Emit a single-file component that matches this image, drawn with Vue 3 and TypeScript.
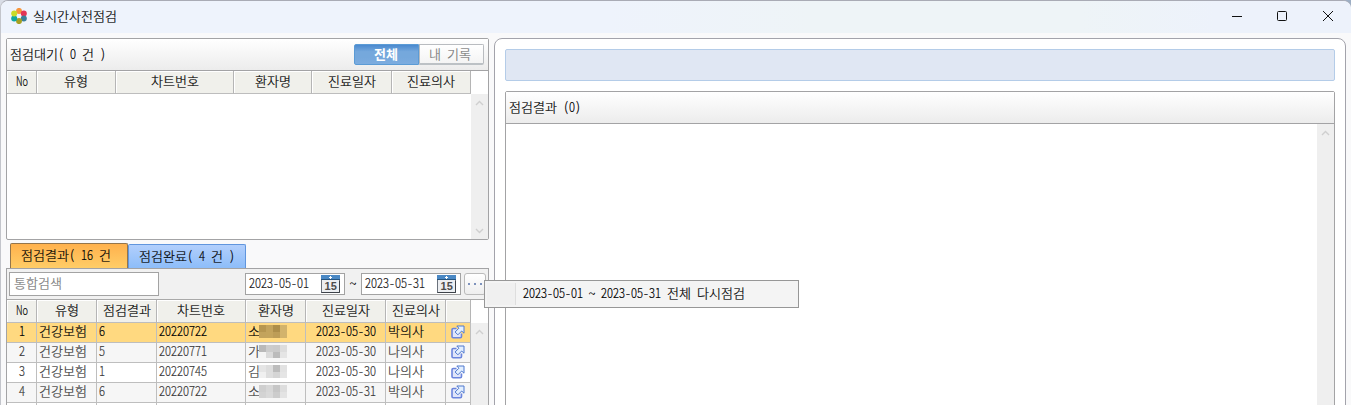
<script setup lang="ts">
import { h, type FunctionalComponent } from 'vue'

interface Column { label: string; width: number }
interface Row { no: string; kind: string; result: string; chart: string; name: string; date: string; doctor: string; mask: string[] }

// Text on a fixed grid: 12px for a Hangul syllable, 6px for a Latin character.
const Grid: FunctionalComponent<{ t: string; bold?: boolean }> = (props) => {
  const runs = props.t.match(/[가-힣]+|[0-9]+|[A-Za-z]+|[^가-힣0-9A-Za-z]/g) ?? []
  let x = 0
  const nodes = []
  for (const run of runs) {
    const hangul = /[가-힣]/.test(run)
    const width = run.length * (hangul ? 12 : 6)
    if (/[()~-]/.test(run)) {
      nodes.push(h('text', { x: x + 3, y: 11, 'text-anchor': 'middle' }, run))
    } else if (run !== ' ') {
      nodes.push(h('text', { x, y: 11, textLength: width, lengthAdjust: 'spacingAndGlyphs' }, run))
    }
    x += width
  }
  return h('svg', { class: ['grid-text', { bold: props.bold }], width: x, height: 14 }, nodes)
}
Grid.props = ['t', 'bold']

const waiting: Column[] = [
  { label: 'No', width: 30 }, { label: '유형', width: 79 }, { label: '차트번호', width: 118 },
  { label: '환자명', width: 78 }, { label: '진료일자', width: 80 }, { label: '진료의사', width: 79 },
]
const results: Column[] = [
  { label: 'No', width: 30 }, { label: '유형', width: 60 }, { label: '점검결과', width: 60 },
  { label: '차트번호', width: 89 }, { label: '환자명', width: 60 }, { label: '진료일자', width: 80 },
  { label: '진료의사', width: 60 }, { label: '', width: 25 },
]
const rows: Row[] = [
  { no: '1', kind: '건강보험', result: '6', chart: '20220722', name: '소', date: '2023-05-30', doctor: '박의사', mask: ['#b69650', '#c3a35c', '#ad8e4a', '#d2b36c', '#c3a35c', '#c4a45c', '#bd9d57', '#d2b36c'] },
  { no: '2', kind: '건강보험', result: '5', chart: '20220771', name: '가', date: '2023-05-30', doctor: '나의사', mask: ['#b9b9b9', '#cccccc', '#cacaca', '#dddddd', '#f4f4f4', '#dadada', '#bbbbbb', '#e5e5e5'] },
  { no: '3', kind: '건강보험', result: '1', chart: '20220745', name: '김', date: '2023-05-30', doctor: '나의사', mask: ['#e5e5e5', '#dddddd', '#bcbcbc', '#e2e2e2', '#f0f0f0', '#dedede', '#d5d5d5', '#e5e5e5'] },
  { no: '4', kind: '건강보험', result: '6', chart: '20220722', name: '소', date: '2023-05-31', doctor: '박의사', mask: ['#cfcfcf', '#d7d7d7', '#c6c6c6', '#dddddd', '#d3d3d3', '#d9d9d9', '#cccccc', '#e3e3e3'] },
  { no: '', kind: '', result: '', chart: '', name: '', date: '', doctor: '', mask: ['#e5e5e5', '#d8d8d8', '#bcbcbc', '#e0e0e0', '#e5e5e5', '#d8d8d8', '#bcbcbc', '#e0e0e0'] },
]
const petals = [
  { x: 8, y: 2.9, c: '#f7963c' }, { x: 12.8, y: 5.4, c: '#e23355' }, { x: 12.8, y: 10.6, c: '#3b7f99' },
  { x: 8, y: 13.1, c: '#a6a021' }, { x: 3.2, y: 10.6, c: '#0fa9a0' }, { x: 3.2, y: 5.4, c: '#c8dc28' },
]
const template = (cols: Column[]) => ({ gridTemplateColumns: cols.map((c) => c.width + 'px').join(' ') })
</script>

<template>
  <div class="desktop">
    <div class="window">
      <header class="titlebar">
        <svg class="logo" width="16" height="16" viewBox="0 0 16 16">
          <circle v-for="p in petals" :key="p.c" :cx="p.x" :cy="p.y" r="3" :fill="p.c" />
        </svg>
        <Grid t="실시간사전점검" />
        <svg class="controls" width="104" height="12" viewBox="0 0 104 12" fill="none" stroke="#111" stroke-width="1">
          <path d="M0 6.5H10" />
          <rect x="45.5" y="1.5" width="9" height="9" rx="1" />
          <path d="M91 1l10 10M101 1L91 11" />
        </svg>
      </header>

      <main class="body">
        <section class="left">
          <div class="panel waiting">
            <div class="panel-head">
              <Grid t="점검대기( 0 건 )" />
              <div class="toggle">
                <button class="on"><Grid t="전체" :bold="true" /></button>
                <button class="off"><Grid t="내 기록" /></button>
              </div>
            </div>
            <div class="cols" :style="template(waiting)">
              <div v-for="c in waiting" :key="c.label" class="th"><Grid :t="c.label" /></div>
            </div>
            <div class="empty">
              <div class="scroll">
                <svg width="9" height="6" viewBox="0 0 9 6"><path d="M1 5l3.5-3.5L8 5" /></svg>
                <svg width="9" height="6" viewBox="0 0 9 6"><path d="M1 1l3.5 3.5L8 1" /></svg>
              </div>
            </div>
          </div>

          <div class="tabs">
            <div class="tab active"><Grid t="점검결과( 16 건" /></div>
            <div class="tab done"><Grid t="점검완료( 4 건 )" /></div>
          </div>

          <div class="panel results">
            <div class="filters">
              <div class="search"><Grid t="통합검색" /></div>
              <template v-for="(d, i) in ['2023-05-01', '2023-05-31']" :key="d">
                <Grid v-if="i === 1" class="tilde" t="~" />
                <div class="date">
                  <Grid :t="d" />
                  <svg class="calendar" width="20" height="19" viewBox="0 0 20 19">
                    <rect x=".5" y=".5" width="18" height="17" fill="#eceef1" stroke="#6b727c" />
                    <path d="M0 0H19V5H0Z" fill="#4a88c4" />
                    <path d="M0 4.5H19" stroke="#265580" />
                    <path d="M9.5 1V4M8 2.5H11" stroke="#fff" />
                    <path d="M.5 17.5H18.5V6" fill="none" stroke="#3d4249" />
                    <text x="9.7" y="15.2" text-anchor="middle">15</text>
                  </svg>
                </div>
              </template>
              <button class="more"><i /><i /><i /></button>
            </div>
            <div class="cols" :style="template(results)">
              <div v-for="c in results" :key="c.label" class="th"><Grid v-if="c.label" :t="c.label" /></div>
            </div>
            <div class="table">
              <div class="rows">
                <div v-for="(r, i) in rows" :key="i" class="row" :class="{ selected: i === 0, even: i % 2 === 1 }" :style="template(results)">
                  <div class="td mid"><Grid :t="r.no" /></div>
                  <div class="td"><Grid :t="r.kind" /></div>
                  <div class="td"><Grid :t="r.result" /></div>
                  <div class="td"><Grid :t="r.chart" /></div>
                  <div class="td name">
                    <Grid v-if="r.name" :t="r.name" />
                    <div class="mask" :class="{ lone: !r.name }"><i v-for="(m, k) in r.mask" :key="k" :style="{ background: m }" /></div>
                  </div>
                  <div class="td mid"><Grid :t="r.date" /></div>
                  <div class="td"><Grid :t="r.doctor" /></div>
                  <div class="td open">
                    <svg v-if="r.no" width="14" height="14" viewBox="0 0 14 14">
                      <path d="M5.5 3.5H2.2Q1 3.5 1 4.7V11.5Q1 12.7 2.2 12.7H9.3Q10.5 12.7 10.5 11.5V8.5" fill="#dfe5fa" stroke="#6b85dd" stroke-width="1.6" />
                      <path d="M5.8 1H13V8.2L10.7 6L6.9 9.8L4.1 7L7.9 3.2Z" fill="#e2efff" stroke="#4f79cf" />
                    </svg>
                  </div>
                </div>
              </div>
              <div class="scroll">
                <svg width="9" height="6" viewBox="0 0 9 6"><path d="M1 5l3.5-3.5L8 5" /></svg>
              </div>
            </div>
          </div>
        </section>

        <section class="right">
          <div class="notice" />
          <div class="detail">
            <div class="panel-head"><Grid t="점검결과 (0)" /></div>
            <div class="empty">
              <div class="scroll">
                <svg width="9" height="6" viewBox="0 0 9 6"><path d="M1 5l3.5-3.5L8 5" /></svg>
              </div>
            </div>
          </div>
        </section>
      </main>

      <div class="menu">
        <span class="gutter" />
        <Grid t="2023-05-01 ~ 2023-05-31 전체 다시점검" />
      </div>
    </div>
  </div>
</template>

<style>
body { margin: 0; overflow: hidden; }
.grid-text {
  display: block;
  flex: none;
  overflow: visible;
  fill: currentColor;
  stroke: currentColor;
  stroke-width: .2px;
  font: 300 13px "Noto Sans CJK KR", sans-serif;
}
.grid-text.bold { font-weight: 700; stroke: none; }
</style>

<style scoped>
* { box-sizing: border-box; }
.desktop {
  width: 1351px;
  height: 405px;
  overflow: hidden;
  background: linear-gradient(90deg, #d9dde6 0 637px, #c6c6c6 637px 1343px, #9daec4 1343px);
  color: #000;
}
.window {
  position: relative;
  display: flex;
  flex-direction: column;
  height: 405px;
  border-top: 1px solid #a9abb5;
  border-left: 1px solid #c3c5cb;
  border-radius: 8px 8px 0 0;
  background: #f9f9fa;
  overflow: hidden;
}
.titlebar {
  display: flex;
  flex: none;
  height: 32px;
  padding: 9px 15px 0 10px;
  background: linear-gradient(90deg, #eef3fc 0 45%, #eef4f7 60% 80%, #edf2fb 90%);
}
.logo { margin: -2px 6px 0 0; }
.controls { margin: 0 0 0 auto; }
.body { display: flex; flex: none; height: 372px; padding: 5px 5px 0; }
.left { width: 483px; margin-right: 5px; }
.panel { border: 1px solid #a3a3a5; background: #fff; }
.waiting { height: 202px; border-radius: 2px; }
.panel-head {
  display: flex;
  justify-content: space-between;
  height: 32px;
  padding: 9px 4px 0 3px;
  border-bottom: 1px solid #a3a3a5;
  background: linear-gradient(#fff, #ececec);
}
.toggle { display: flex; width: 130px; height: 21px; margin-top: -4px; }
button { padding: 0; border: 0; background: none; }
.toggle button { display: flex; justify-content: center; width: 65px; height: 21px; padding-top: 3px; }
.toggle .on { border: 1px solid #5b9bd5; padding-right: 2px; border-radius: 2px 0 0 2px; background: linear-gradient(#4a89cf, #75a8dc 35% 65%, #7cacdf); color: #fff; }
.toggle .off { border: 1px solid #b9bcc0; padding-right: 3px; border-bottom: 2px solid #bcc1c5; border-radius: 0 2px 2px 0; background: linear-gradient(#fff, #f4f4f4); color: #777; }
.cols, .row { display: grid; width: 464px; }
.th {
  display: flex;
  justify-content: center;
  height: 23px;
  padding-top: 4px;
  border-right: 1px solid #b5b5b5;
  border-bottom: 1px solid #bdbdbd;
  background: #f0f0eb;
  box-shadow: inset 1px 1px #fff;
}
.empty { display: flex; justify-content: flex-end; height: 145px; }
.scroll {
  display: flex;
  flex-direction: column;
  justify-content: space-between;
  align-items: center;
  width: 17px;
  padding: 6px 0 5px;
  background: #efefef;
}
.scroll path { fill: none; stroke: #cfcfcf; stroke-width: 1.4; }
.tabs { display: flex; align-items: flex-end; height: 28px; padding-left: 4px; }
.tab { width: 118px; border: 1px solid; border-bottom: 0; border-radius: 2px 2px 0 0; }
.active { height: 25px; padding: 5px 0 0 10px; border-color: #94754b; background: linear-gradient(#ffb14d, #ffcd67); }
.done { height: 24px; padding: 5px 0 0 10px; border-color: #6095dd; background: linear-gradient(#b2cffc, #8dbdf9); }
.results { height: 180px; }
.filters {
  display: flex;
  height: 31px;
  padding: 4px 2px 0;
  border-bottom: 1px solid #a9a9a9;
  background: #f1f1f1;
}
.search { width: 150px; height: 24px; margin: -1px 86px 0 0; padding: 4px; border: 1px solid #a3a3a3; background: #fff; color: #777; }
.date { display: flex; width: 100px; height: 22px; padding: 3px 0 0 3px; border: 1px solid #a3a3a3; background: #fff; color: #222; }
.calendar { margin: -2px 0 0 12px; }
.calendar text { font: bold 11px "Liberation Sans", sans-serif; fill: #4c4c4c; }
.tilde { margin: 4px 5px 0; }
.more { display: flex; justify-content: center; align-items: center; gap: 4px; width: 22px; height: 22px; margin-left: 3px; border: 1px solid #bbb; border-radius: 3px; background: linear-gradient(#fff, #eee); }
.more i { flex: none; width: 2px; height: 2px; border-radius: 1px; background: #5471a8; }
.table { display: flex; height: 120px; }
.rows { width: 464px; }
.row { height: 20px; color: #3a3a3a; background: #fff; }
.even { background: #f6f6f6; }
.selected { background: #ffd980; color: #000; }
.td { display: flex; height: 20px; padding: 2px 0 0 2px; border-right: 1px solid #bebebe; border-bottom: 1px solid #bebebe; }
.mid { justify-content: center; padding-left: 0; }
.open { padding: 2px 0 0 5px; }
.mask { display: grid; grid-template-columns: repeat(4, 7px); grid-template-rows: 7px 6px; margin-left: -1px; }
.mask.lone { margin-left: 11px; }
.right { display: flex; flex-direction: column; width: 852px; height: 380px; padding: 10px; border: 1px solid #a3a3ab; border-radius: 8px 8px 0 0; background: #fff; }
.notice { flex: none; height: 32px; margin-bottom: 10px; border: 1px solid #b4cce8; border-radius: 2px; background: #e0e7f3; }
.detail { flex: none; height: 330px; border: 1px solid #a3a3a5; border-radius: 2px; }
.detail .empty { height: 298px; }
.menu {
  position: absolute;
  left: 483px;
  top: 279px;
  display: flex;
  width: 315px;
  height: 28px;
  padding: 2px;
  border: 1px solid #979797;
  background: #f4f4f4;
}
.gutter { width: 29px; height: 22px; border-right: 1px solid #dedede; background: #f0f0f0; }
.menu .grid-text { margin: 4px 0 0 7px; }
</style>
